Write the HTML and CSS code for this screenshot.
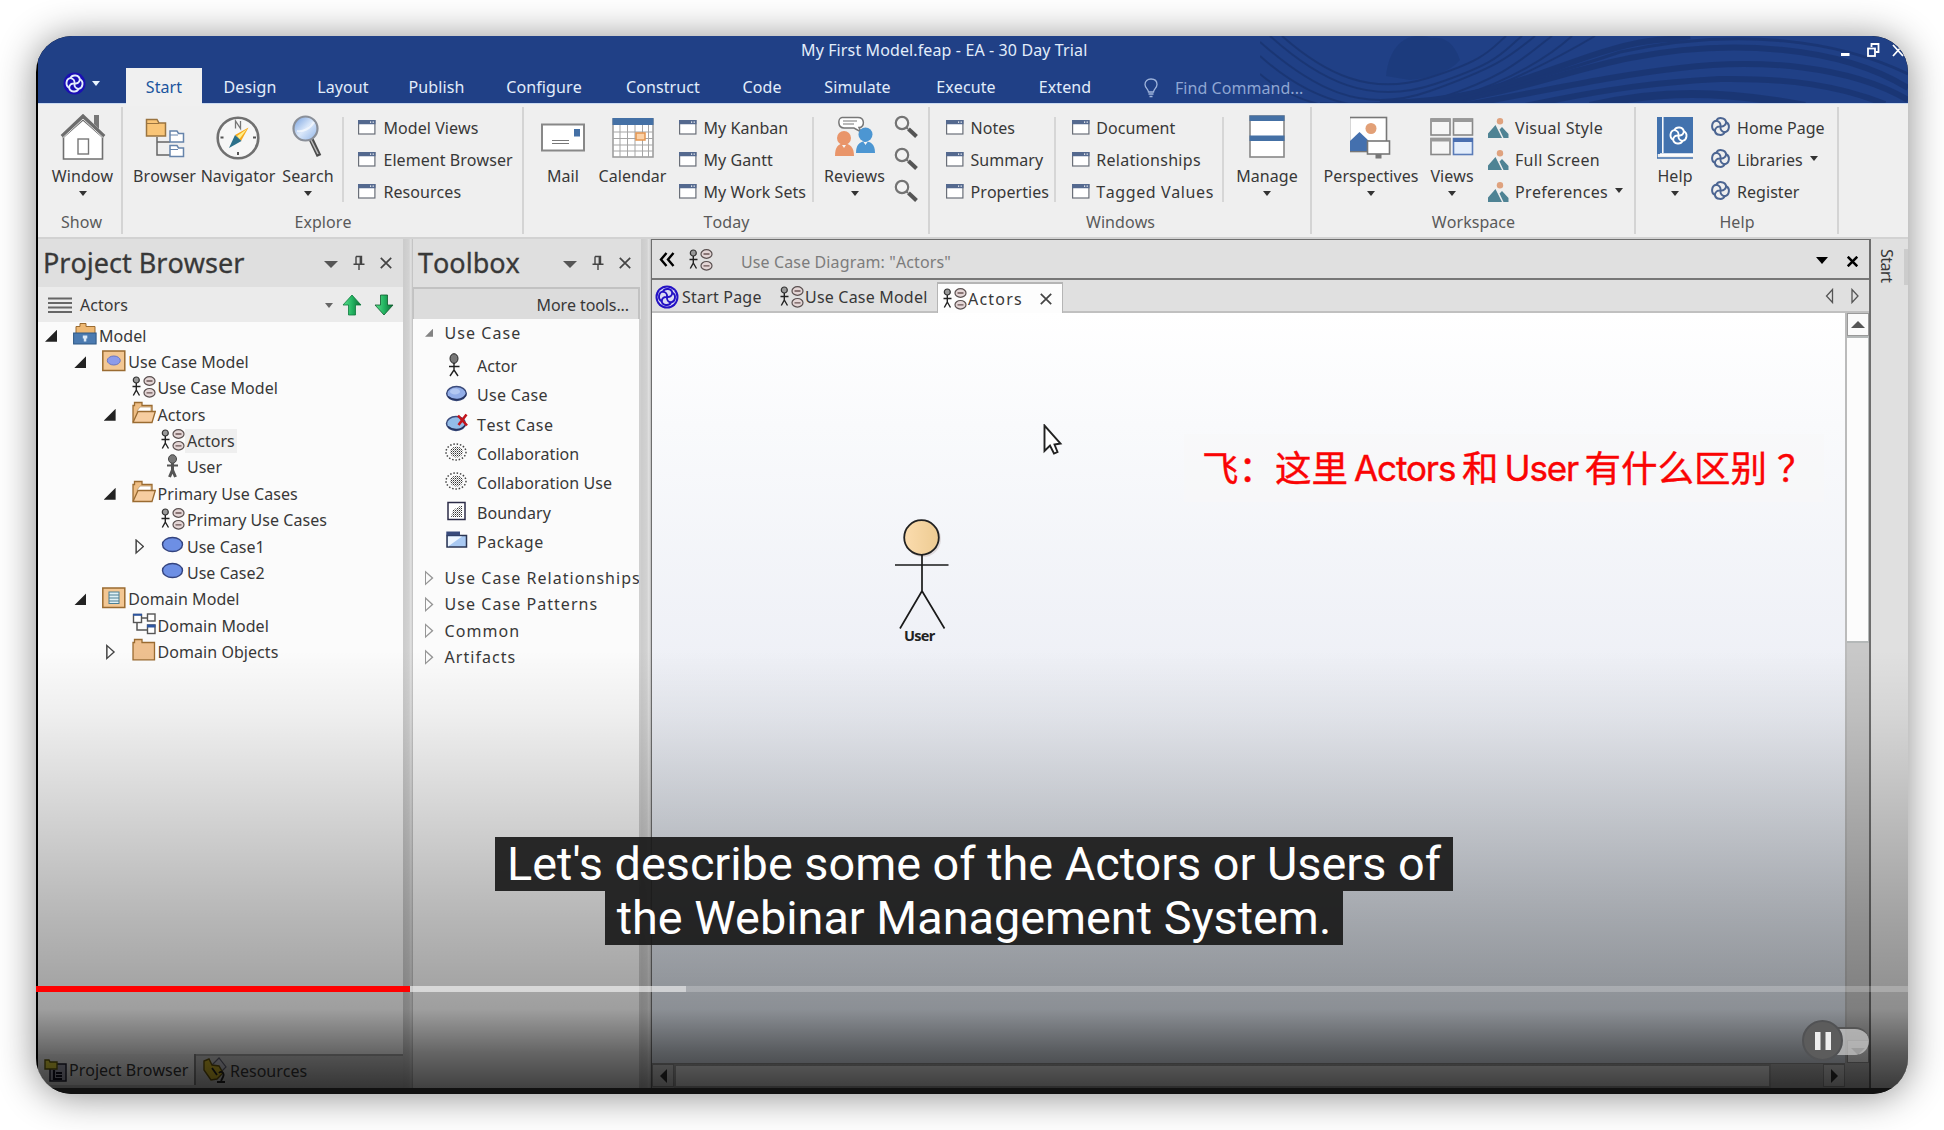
FILE: index.html
```html
<!DOCTYPE html>
<html lang="en">
<head>
<meta charset="utf-8">
<title>My First Model.feap - EA - 30 Day Trial</title>
<link rel="stylesheet" href="styles.css">
</head>
<body>
<svg width="0" height="0" class="defs" aria-hidden="true">
  <defs>
    <linearGradient id="green" x1="0" x2="1"><stop offset="0" stop-color="#5fe08e"/><stop offset=".5" stop-color="#23b562"/><stop offset="1" stop-color="#0b6b34"/></linearGradient>
    <linearGradient id="lens" x1="0" y1="0" x2="1" y2="1"><stop offset="0" stop-color="#6f9bdc"/><stop offset=".5" stop-color="#dbe8fa"/><stop offset="1" stop-color="#8db2e6"/></linearGradient>
    <linearGradient id="skin" x1="0" x2="1"><stop offset="0" stop-color="#fbdcae"/><stop offset="1" stop-color="#edcb92"/></linearGradient>
    <pattern id="dots" width="2" height="2" patternUnits="userSpaceOnUse"><rect width="1" height="1" fill="#333"/><rect x="1" y="1" width="1" height="1" fill="#999"/></pattern>
  </defs>
  <symbol id="knot" viewBox="0 0 24 24">
    <g fill="none" stroke="currentColor" stroke-width="2.300" stroke-linecap="round" transform="rotate(8 12 12)">
      <path d="M6.300 6.300A5.900 5.300 0 0 1 17.700 6.300A5.300 5.900 0 0 1 17.700 17.700A5.900 5.300 0 0 1 6.300 17.700A5.300 5.900 0 0 1 6.300 6.300Z"/>
      <path d="M12 12C12 8.500 9.500 6.300 6.300 6.300M12 12C15.500 12 17.700 9.500 17.700 6.300M12 12C12 15.500 14.500 17.700 17.700 17.700M12 12C8.500 12 6.300 14.500 6.300 17.700"/>
    </g>
  </symbol>
  <symbol id="win" viewBox="0 0 18 15"><rect x=".6" y=".6" width="16.300" height="13.400" fill="#fff" stroke="#6a6f78" stroke-width="1.200"/><path d="M0 0H17.500V4.200H0Z" fill="#54698f"/><path d="M12 1.500h1.200v1.200H12zM14.600 1.500h1.200v1.200h-1.200z" fill="#fff"/></symbol>
  <symbol id="mag" viewBox="0 0 24 22"><circle cx="8" cy="7.500" r="6.200" fill="#f3f3f3" stroke="#747474" stroke-width="2.200"/><path d="M12.500 12L14 13.500" stroke="#747474" stroke-width="2"/><path d="M14.500 13.500L22.500 21" stroke="#555" stroke-width="4"/></symbol>
  <symbol id="scene" viewBox="0 0 21 20"><circle cx="12" cy="3.300" r="3.200" fill="#dfa27e"/><path d="M0 20V15.500L7.500 7L14 20Z M15.500 20L11.500 11.500L14 9L20.500 16V20Z" fill="#4f8394"/></symbol>
  <symbol id="uc" viewBox="0 0 24 22"><circle cx="4.300" cy="4" r="3" fill="#999" stroke="#333" stroke-width="1.200"/><path d="M4.300 7V14L1.300 19.500M4.300 14L7.500 19.500M.5 10.500H8.500" fill="none" stroke="#222" stroke-width="1.400"/><g fill="#e4d6d6" stroke="#5a5050" stroke-width="1.200"><ellipse cx="17.500" cy="5" rx="5.500" ry="4.300"/><ellipse cx="17.500" cy="16.800" rx="5.500" ry="4.300"/></g><path d="M14.500 5h6M14.500 16.800h6" stroke="#6b5555" stroke-width="1.300"/></symbol>
  <symbol id="i-model" viewBox="0 0 24 24"><path d="M3 12V4.500H7V1.500H13V4.500H22V12Z" fill="#eeb873" stroke="#9a6b31"/><rect x=".6" y="11" width="22.500" height="11" fill="#4b7ab0" stroke="#2f5885"/><path d="M9.800 13.500h4.500v3h-1v3h-2.500v-3h-1z" fill="#dce9f7"/></symbol>
  <symbol id="i-ucpkg" viewBox="0 0 24 24"><rect x=".8" y="2" width="22" height="19.500" fill="#f3c793" stroke="#9a6b31" stroke-width="1.500"/><ellipse cx="11.800" cy="11.500" rx="6.500" ry="4.500" fill="#8d9bea" stroke="#6b76c0"/></symbol>
  <symbol id="i-dompkg" viewBox="0 0 24 24"><rect x=".8" y="2" width="22" height="19.500" fill="#f3c793" stroke="#9a6b31" stroke-width="1.500"/><rect x="7" y="6" width="10" height="11.500" fill="#dff0f5" stroke="#4c7f94"/><path d="M7 9h10M7 12h10M7 15h10" stroke="#4c7f94"/></symbol>
  <symbol id="i-open" viewBox="0 0 24 24"><path d="M1 21V4.500H2.500V1.500H10V4.500H20V10" fill="#eebd83" stroke="#9a6b31" stroke-width="1.300"/><path d="M5 10L8 6H19V12H6Z" fill="#fff" stroke="#b99a70" stroke-width=".8"/><path d="M1 21.500L6 10.500H23.300L20 21.500Z" fill="#f6cda0" stroke="#9a6b31" stroke-width="1.300"/></symbol>
  <symbol id="i-closed" viewBox="0 0 24 24"><path d="M1 21.800V4.500H2.500V1.500H10V4.500H22.500V21.800Z" fill="#eec08f" stroke="#9a6b31" stroke-width="1.300"/></symbol>
  <symbol id="i-user" viewBox="0 0 24 24"><ellipse cx="11.500" cy="5" rx="4" ry="4.300" fill="#777" stroke="#444"/><path d="M11.500 9V16L8.500 23M11.500 16L14.500 23" fill="none" stroke="#555" stroke-width="3"/><path d="M6 11.500H17" stroke="#555" stroke-width="2"/></symbol>
  <symbol id="i-oval" viewBox="0 0 24 24"><ellipse cx="11.500" cy="11.500" rx="10" ry="7" fill="#6d8fe4" stroke="#33437e" stroke-width="1.400"/></symbol>
  <symbol id="i-dom" viewBox="0 0 24 24"><g fill="#fff" stroke="#555" stroke-width="1.400"><rect x="1.500" y="2.500" width="8" height="8"/><rect x="15.500" y="2" width="7.500" height="7"/><rect x="15.500" y="13" width="7.500" height="8.500"/></g><path d="M9.500 6H15.500M5 10.500V18H15.500" fill="none" stroke="#555" stroke-width="1.500"/><path d="M1 1.800h9v2H1zM15 12.500h8.500v3H15z" fill="#2d55a0"/></symbol>
  <symbol id="t-actor" viewBox="0 0 24 24"><ellipse cx="9" cy="5.500" rx="4" ry="4.800" fill="#777" stroke="#222"/><path d="M9 10V17L5 23M9 17L13 23M4 13.500H14.500" fill="none" stroke="#222" stroke-width="1.400"/></symbol>
  <symbol id="t-oval" viewBox="0 0 24 24"><ellipse cx="11.500" cy="11.500" rx="9.800" ry="6.900" fill="#93aee8" stroke="#3a4a7a" stroke-width="1.500"/><ellipse cx="10" cy="9.500" rx="5" ry="3" fill="#b3c8f2"/><path d="M3 14.500C8 19 18 18.500 21 12.500" fill="none" stroke="#25335f" stroke-width="1.600"/></symbol>
  <symbol id="t-test" viewBox="0 0 24 24"><ellipse cx="11" cy="11.500" rx="9.500" ry="6.900" fill="#93bce8" stroke="#3a4a7a" stroke-width="1.500"/><path d="M3 14.500C8 19 16 18.500 20 13.500" fill="none" stroke="#25335f" stroke-width="1.600"/><path d="M13 3.500L22 13.500M21.500 2.500L13.500 13" stroke="#c3141c" stroke-width="2.600"/></symbol>
  <symbol id="t-collab" viewBox="0 0 24 24"><ellipse cx="11" cy="11" rx="10" ry="8" fill="none" stroke="#444" stroke-width="1.500" stroke-dasharray="1.500 1.800"/><ellipse cx="11.500" cy="11" rx="6.500" ry="5.500" fill="url(#dots)"/></symbol>
  <symbol id="t-bound" viewBox="0 0 24 24"><rect x="3" y="2.500" width="17" height="17" fill="#fff" stroke="#2c2c48" stroke-width="1.500"/><path d="M6 17L8 10L17 5V17Z" fill="url(#dots)"/></symbol>
  <symbol id="t-pkg" viewBox="0 0 24 24"><rect x="2" y="6.500" width="19.500" height="11.500" fill="#a9c9f2" stroke="#2b3552" stroke-width="1.500"/><path d="M3 17.500V7.500H17Z" fill="#eef6ff"/><path d="M1.300 2.500H15V6.500H1.300Z" fill="#384a7c"/></symbol>
  <symbol id="pin" viewBox="0 0 12 16"><path d="M3 1.500H8.500V9M3 1.500V9M7.300 1.500V9M.5 9.200H11.500M6 9.200V15" fill="none" stroke="#444" stroke-width="1.400"/></symbol>
  <symbol id="cross" viewBox="0 0 12 12"><path d="M.8.8L11.200 11.200M11.200.8L.8 11.200" stroke="currentColor"/></symbol>
</svg>

<main class="window">
  <header class="titlebar">
    <svg class="waves" viewBox="0 0 648 67" preserveAspectRatio="none">
      <g fill="none" stroke="#19336f">
        <path d="M126 40C130 5 150-5 172 2C188 0 196 12 200 24C190 36 170 42 150 44Z" fill="#1a3878" stroke="none" opacity=".8"/>
        <g stroke-width="2"><path d="M0 6C50 50 100 80 170 55S250 20 275 0"/><path d="M10 0C60 45 110 70 175 48S240 18 262 0"/><path d="M0 20C50 65 110 85 180 62S265 20 292 0"/><path d="M22 0C65 38 110 60 168 42S230 14 246 0"/><path d="M0 38C60 90 150 75 200 60S290 20 312 0"/><path d="M60 67C130 70 210 62 250 44S310 15 335 0"/></g>
        <g stroke-width="6"><path d="M120 67C220 66 270 40 330 20S400 6 430 0"/><path d="M150 70C250 60 300 36 370 22C470 2 580 10 648 52"/><path d="M200 70C300 52 350 40 420 32C500 22 590 30 648 64"/><path d="M265 70C350 52 400 46 460 43C530 42 580 50 625 68"/></g>
        <path d="M330 70C400 54 460 54 545 70" stroke-width="8"/>
        <path d="M190 70C280 40 320 30 360 16C480-10 580 5 648 38" stroke-width="3"/>
      </g>
    </svg>
    <div class="title-row">
      <span class="doc-title">My First Model.feap - EA - 30 Day Trial</span>
      <svg class="win-buttons" width="68" height="18" viewBox="0 0 68 18"><g stroke="#fff" fill="none" stroke-width="1.800"><path d="M2 13.500H10.500" stroke-width="3"/><path d="M32.500 6V3H39.500V11H37" /><rect x="29" y="7.500" width="7" height="7.500"/><path d="M54 4L64 15M64 4L54 15"/></g></svg>
    </div>
    <nav class="tabs">
      <span class="app-menu"><svg width="23" height="23"><circle cx="11.500" cy="11.500" r="11" fill="#1a0fb4"/><use href="#knot" x="1.500" y="1.500" width="20" height="20"/></svg><i class="caret light"></i></span>
      <span class="tab active">Start</span><span class="tab">Design</span><span class="tab">Layout</span><span class="tab">Publish</span><span class="tab">Configure</span><span class="tab">Construct</span><span class="tab">Code</span><span class="tab">Simulate</span><span class="tab">Execute</span><span class="tab">Extend</span>
      <span class="find"><svg width="14" height="20" viewBox="0 0 14 20"><path d="M4.500 14C4.500 11 1 10 1 6.500C1 3 3.500 1 7 1S13 3 13 6.500C13 10 9.500 11 9.500 14ZM4.500 16H9.500M5.500 18.500H8.500" fill="none" stroke="#9fb4dc" stroke-width="1.300"/></svg>Find Command...</span>
    </nav>
  </header>

  <section class="ribbon">
    <div class="group show">
      <div class="tools">
        <div class="big"><svg width="46" height="46" viewBox="0 0 46 46"><path d="M34 1H39V15L34 10Z" fill="#777"/><path d="M3.500 45V23L23 6L42.500 23V45Z" fill="#fff" stroke="#707070" stroke-width="1.600"/><path d="M2 22.500L23 2.500L44 22.500" fill="none" stroke="#6d6d6d" stroke-width="4"/><path d="M3 23.500L23 5L43 23.500" fill="none" stroke="#ddd" stroke-width="1"/><rect x="18" y="25" width="10.500" height="15" fill="#fff" stroke="#777" stroke-width="1.400"/></svg><span>Window</span><i class="caret"></i></div>
      </div><h3>Show</h3>
    </div>
    <div class="group explore">
      <div class="tools">
        <div class="big"><svg width="40" height="46" viewBox="0 0 40 46"><path d="M12 23V41H25M12 28H25" fill="none" stroke="#666" stroke-width="1.500"/><path d="M1.500 22V5.500H12L14 9H20.500V22Z" fill="#f9c577" stroke="#9a7440" stroke-width="1.500"/><path d="M1.500 9.500H14" stroke="#9a7440"/><g fill="#fff" stroke="#6684ab" stroke-width="1.500"><path d="M25 28V17H32L33.500 19.500H38.500V28Z"/><path d="M25 42.500V31.500H32L33.500 34H38.500V42.500Z"/></g><path d="M25 21H33M25 35.500H33" stroke="#6684ab"/></svg><span>Browser</span></div>
        <div class="big"><svg width="46" height="46" viewBox="0 0 46 46"><circle cx="23" cy="24" r="20.300" fill="#f6f6f6" stroke="#707070" stroke-width="2.600"/><path d="M20.500 14.500V7L25.500 14.500V7" fill="none" stroke="#777" stroke-width="1.300"/><path d="M5.500 23.500h3M38 23.500h3M23 38v3" stroke="#555" stroke-width="2"/><path d="M33.500 13.500L20 21L26 27Z" fill="#f7a81b"/><path d="M32 15L22 22L24.500 25Z" fill="#fff08a"/><path d="M14 34L20 21L26.500 27Z" fill="#2b708a"/></svg><span>Navigator</span></div>
        <div class="big"><svg width="34" height="46" viewBox="0 0 34 46"><path d="M20 25L28 42" stroke="#4c4c4c" stroke-width="5"/><path d="M20 26L27 40" stroke="#bbb" stroke-width="1.500"/><circle cx="14.500" cy="14.500" r="12" fill="url(#lens)" stroke="#8a8f98" stroke-width="2.200"/><path d="M6 17C12 18 19 15 23 8" stroke="#fff" stroke-width="2" fill="none" opacity=".6"/></svg><span>Search</span><i class="caret"></i></div>
        <ul class="list divided-left"><li><svg><use href="#win"/></svg>Model Views</li><li><svg><use href="#win"/></svg>Element Browser</li><li><svg><use href="#win"/></svg>Resources</li></ul>
      </div><h3>Explore</h3>
    </div>
    <div class="group today">
      <div class="tools">
        <div class="big"><svg width="44" height="46" viewBox="0 0 44 46"><rect x="1" y="10.500" width="42" height="26" fill="#fff" stroke="#888" stroke-width="2"/><rect x="33" y="15" width="6" height="7.500" fill="#4470a5"/><path d="M11 26.500H28M11 29.500H28" stroke="#777" stroke-width="1.200"/></svg><span>Mail</span></div>
        <div class="big"><svg width="42" height="46" viewBox="0 0 42 46"><rect x="1" y="5" width="40" height="38" fill="#fff" stroke="#999" stroke-width="1.500"/><path d="M8 11V43M15.500 11V43M23 11V43M30.500 11V43M36.500 11V43M1 18H41M1 24.500H41M1 31H41M1 37H41" stroke="#a5a5a5"/><rect x=".5" y="4" width="41" height="7" fill="#4470a5"/><rect x="24" y="19" width="9" height="7" fill="#fbd1a6" stroke="#e39550" stroke-width="1.500"/></svg><span>Calendar</span></div>
        <ul class="list divided-right"><li><svg><use href="#win"/></svg>My Kanban</li><li><svg><use href="#win"/></svg>My Gantt</li><li><svg><use href="#win"/></svg>My Work Sets</li></ul>
        <div class="big"><svg width="42" height="46" viewBox="0 0 42 46"><path d="M8 3.500H24C31 3.500 31 13.500 25 13.500L27 18L20 14H10C3.500 14 3.500 4 8 3.500Z" fill="#fff" stroke="#777" stroke-width="1.500"/><path d="M9 7H23M9 10H20" stroke="#777" stroke-width="1.200"/><circle cx="10" cy="24" r="7" fill="#e9956a"/><path d="M1 42C1 33 4 30 10 29C16 30 20 33 20 42Z" fill="#e9956a"/><circle cx="31.500" cy="20.500" r="7" fill="#4c96d2"/><path d="M22 39C22 31 25 28 31 27C37 28 41 30 41 39Z" fill="#4c96d2"/><path d="M8 31L10 34L12 31M29.500 28L31.500 31L33.500 28" fill="#f5f5f5"/></svg><span>Reviews</span><i class="caret"></i></div>
        <ul class="mags"><li><svg><use href="#mag"/></svg></li><li><svg><use href="#mag"/></svg></li><li><svg><use href="#mag"/></svg></li></ul>
      </div><h3>Today</h3>
    </div>
    <div class="group windows">
      <div class="tools">
        <ul class="list divided-right"><li><svg><use href="#win"/></svg>Notes</li><li><svg><use href="#win"/></svg>Summary</li><li><svg><use href="#win"/></svg>Properties</li></ul>
        <ul class="list divided-right"><li><svg><use href="#win"/></svg>Document</li><li class="wide"><svg><use href="#win"/></svg>Relationships</li><li class="wider"><svg><use href="#win"/></svg>Tagged Values</li></ul>
        <div class="big"><svg width="36" height="46" viewBox="0 0 36 46"><rect x="1" y="2" width="34" height="41" fill="#fff" stroke="#888" stroke-width="1.600"/><path d="M.5 1.500H35.500V7H.5ZM.5 21.500H35.500V27H.5Z" fill="#4470a5"/></svg><span>Manage</span><i class="caret"></i></div>
      </div><h3>Windows</h3>
    </div>
    <div class="group workspace">
      <div class="tools">
        <div class="big"><svg width="42" height="46" viewBox="0 0 42 46"><rect x="-.5" y="3.500" width="37" height="34" fill="#fff" stroke="#777" stroke-width="1.600"/><circle cx="21" cy="14.500" r="5.500" fill="#e2a077"/><path d="M0 37V27L9.500 18L20 28V37Z" fill="#4470ae"/><rect x="17.500" y="27" width="22" height="13" fill="#fff" stroke="#777" stroke-width="1.600"/><path d="M25.500 40h6v4.500h-6z" fill="#777"/></svg><span>Perspectives</span><i class="caret"></i></div>
        <div class="big"><svg width="44" height="46" viewBox="0 0 44 46"><g fill="#f5f5f5" stroke="#888" stroke-width="1.600"><rect x="1" y="5" width="19" height="16"/><rect x="23.500" y="5" width="19" height="16"/><rect x="1" y="24.500" width="19" height="16"/></g><rect x="23.500" y="24.500" width="19" height="16" fill="#e3edfb" stroke="#5b7cb8" stroke-width="1.600"/><path d="M1 4.500h19v3.500H1zM23.500 4.500h19v3.500h-19zM1 24h19v3.500H1z" fill="#999"/><path d="M23 24h20v4H23z" fill="#4a6fb0"/></svg><span>Views</span><i class="caret"></i></div>
        <ul class="list scenes"><li><svg><use href="#scene"/></svg>Visual Style</li><li><svg><use href="#scene"/></svg>Full Screen</li><li><svg><use href="#scene"/></svg>Preferences<i class="caret"></i></li></ul>
      </div><h3>Workspace</h3>
    </div>
    <div class="group help">
      <div class="tools">
        <div class="big"><svg width="36" height="46" viewBox="0 0 36 46"><path d="M0 3H36V40H0Z" fill="#4272ae"/><path d="M5.800 3V39" stroke="#fff" stroke-width="1.500"/><path d="M3 40.500H36" stroke="#fff" stroke-width="2.500"/><path d="M0 40V44H36" fill="none" stroke="#4272ae" stroke-width="1.500"/><use href="#knot" x="11.500" y="11.500" width="20" height="20" color="#fff"/></svg><span>Help</span><i class="caret"></i></div>
        <ul class="list knots"><li><svg><use href="#knot"/></svg>Home Page</li><li><svg><use href="#knot"/></svg>Libraries<i class="caret"></i></li><li><svg><use href="#knot"/></svg>Register</li></ul>
      </div><h3>Help</h3>
    </div>
  </section>

  <section class="workarea">
    <aside class="project">
      <div class="panel-title"><h2>Project Browser</h2><i class="caret big-caret"></i><svg class="pin"><use href="#pin"/></svg><svg class="x"><use href="#cross"/></svg></div>
      <div class="panel-bar">
        <svg width="24" height="16" viewBox="0 0 24 16"><path d="M0 1.500H24M0 6H24M0 10.500H24M0 15H24" stroke="#666" stroke-width="2"/></svg>
        <span>Actors</span><i class="caret"></i>
        <svg width="20" height="22" viewBox="0 0 20 22"><path d="M10 1L19 11H13.500V21H6.500V11H1Z" fill="url(#green)" stroke="#0d7a3c" stroke-width=".8"/></svg>
        <svg width="20" height="22" viewBox="0 0 20 22"><path d="M10 21L19 11H13.500V1H6.500V11H1Z" fill="url(#green)" stroke="#0d5a2c" stroke-width=".8"/></svg>
      </div>
      <ul class="tree">
        <li style="--level:0"><i class="open"></i><svg><use href="#i-model"/></svg><span>Model</span></li>
        <li style="--level:1"><i class="open"></i><svg><use href="#i-ucpkg"/></svg><span>Use Case Model</span></li>
        <li style="--level:2"><i></i><svg><use href="#uc"/></svg><span>Use Case Model</span></li>
        <li style="--level:2"><i class="open"></i><svg><use href="#i-open"/></svg><span>Actors</span></li>
        <li style="--level:3"><i></i><svg><use href="#uc"/></svg><span class="selected">Actors</span></li>
        <li style="--level:3"><i></i><svg><use href="#i-user"/></svg><span>User</span></li>
        <li style="--level:2"><i class="open"></i><svg><use href="#i-open"/></svg><span>Primary Use Cases</span></li>
        <li style="--level:3"><i></i><svg><use href="#uc"/></svg><span>Primary Use Cases</span></li>
        <li style="--level:3"><i class="shut"></i><svg><use href="#i-oval"/></svg><span>Use Case1</span></li>
        <li style="--level:3"><i></i><svg><use href="#i-oval"/></svg><span>Use Case2</span></li>
        <li style="--level:1"><i class="open"></i><svg><use href="#i-dompkg"/></svg><span>Domain Model</span></li>
        <li style="--level:2"><i></i><svg><use href="#i-dom"/></svg><span>Domain Model</span></li>
        <li style="--level:2"><i class="shut"></i><svg><use href="#i-closed"/></svg><span>Domain Objects</span></li>
      </ul>
      <div class="bottom-tabs">
        <span class="current"><svg width="24" height="25" viewBox="0 0 24 25"><rect x="6" y="6" width="16" height="17" fill="#aab" stroke="#223" stroke-width="1.500"/><path d="M1 11V2H5L6 4H13V11Z" fill="#e6d83c" stroke="#665e10" stroke-width="1.400"/><path d="M10 12V21H18M12 15h6M12 18h6" stroke="#112" stroke-width="2.200" fill="none"/></svg>Project Browser</span>
        <span><svg width="25" height="28" viewBox="0 0 25 28"><path d="M9 8L16 1L23 10L15 18Z" fill="#c9c9d2" stroke="#667" stroke-width="1.200"/><path d="M1 13V4L6 2L9 8L16 9L20 16L14 22L8 23Z" fill="#d8bc2c" stroke="#665510" stroke-width="1.400"/><path d="M16 16C18 13 22 16 20 20L18 24M14 25H22M9 11L14 18" fill="none" stroke="#222" stroke-width="1.800"/></svg>Resources</span>
      </div>
    </aside>
    <div class="splitter"></div>
    <aside class="toolbox">
      <div class="panel-title"><h2>Toolbox</h2><i class="caret big-caret"></i><svg class="pin"><use href="#pin"/></svg><svg class="x"><use href="#cross"/></svg></div>
      <div class="more">More tools...</div>
      <div class="tool-body">
        <h4><i class="open"></i>Use Case</h4>
        <ul>
          <li><svg><use href="#t-actor"/></svg>Actor</li><li class="wide"><svg><use href="#t-oval"/></svg>Use Case</li><li class="wider"><svg><use href="#t-test"/></svg>Test Case</li><li><svg><use href="#t-collab"/></svg>Collaboration</li><li><svg><use href="#t-collab"/></svg>Collaboration Use</li><li><svg><use href="#t-bound"/></svg>Boundary</li><li class="wider"><svg><use href="#t-pkg"/></svg>Package</li>
        </ul>
        <h4><i class="shut"></i>Use Case Relationships</h4><h4><i class="shut"></i>Use Case Patterns</h4><h4><i class="shut"></i>Common</h4><h4><i class="shut"></i>Artifacts</h4>
      </div>
    </aside>
    <div class="splitter"></div>
    <section class="document">
      <div class="doc-head">
        <svg width="16" height="15" viewBox="0 0 16 15"><path d="M7.500 1L2 7.500L7.500 14M14.500 1L9 7.500L14.500 14" fill="none" stroke="#000" stroke-width="2.400"/></svg>
        <svg class="uc"><use href="#uc"/></svg><span>Use Case Diagram: "Actors"</span>
        <i class="caret black"></i><svg class="x bold"><use href="#cross"/></svg>
      </div>
      <div class="doc-tabs">
        <span class="dt start"><svg width="24" height="24"><circle cx="12" cy="12" r="11.500" fill="#2412c4"/><circle cx="12" cy="12" r="9.500" fill="#dcdcf4"/><use href="#knot" x="2" y="2" width="20" height="20" color="#2412c4"/></svg>Start Page</span>
        <span class="dt ucm"><svg class="uc"><use href="#uc"/></svg>Use Case Model</span>
        <span class="dt on"><svg class="uc"><use href="#uc"/></svg>Actors<svg class="x"><use href="#cross"/></svg></span>
        <svg class="arrows" width="34" height="16" viewBox="0 0 34 16"><path d="M7.500 1.500V14.500L1.500 8ZM27 1.500V14.500L33 8Z" fill="none" stroke="#555" stroke-width="1.300"/></svg>
      </div>
      <div class="sheet">
        <div class="canvas">
          <svg class="actor" width="60" height="114" viewBox="0 0 60 114"><circle cx="29" cy="20" r="18" fill="#b9a9a9" opacity=".35"/><circle cx="27.500" cy="18.500" r="17.300" fill="url(#skin)" stroke="#222" stroke-width="1.800"/><path d="M28 36V72.500M1 46H54.500M28 72L6 109.500M28 72L50.500 109.500" stroke="#1a1a1a" stroke-width="1.700" fill="none"/></svg>
          <span class="actor-name">User</span>
          <svg class="pointer" width="20" height="32" viewBox="0 0 20 32"><path d="M1.500 1.500V27L7 21.500L11 29.500L14.500 28L11.500 20.500L17.500 19.500Z" fill="#fff" stroke="#222" stroke-width="1.900"/></svg>
          <div class="note" lang="zh"><span>飞：</span><span>这里</span><b>Actors</b><span>和</span><b class="user">User</b><span>有什么区别</span><span class="qm">？</span></div>
        </div>
        <div class="vscroll"><span class="btn"><i class="up"></i></span><span class="thumb"></span><span class="btn low"><i class="down"></i></span></div>
        <div class="hscroll"><span class="btn"><i class="left"></i></span><span class="thumb"></span><span class="btn"><i class="right"></i></span></div>
        <div class="corner"></div>
      </div>
    </section>
    <aside class="side"><span>Start</span><i></i></aside>
  </section>
  <div class="strip"></div>

  <div class="shade"></div>
  <div class="pause"><i></i><span><svg width="16" height="18" viewBox="0 0 16 18"><path d="M0 0h5.500v18H0zM10.500 0H16v18h-5.500z" fill="#eee"/></svg></span></div>
  <div class="progress"><i class="loaded"></i><i class="played"></i></div>
  <div class="caption"><p>Let's describe some of the Actors or Users of</p><p>the Webinar Management System.</p></div>
</main>
</body>
</html>
```
FILE: styles.css
```css
* { box-sizing: border-box; }
body { margin: 0; width: 1944px; height: 1130px; overflow: hidden; background: #fff; padding: 36px; font: 16px/22px "Noto Sans", sans-serif; font-kerning: none; letter-spacing: .05px; color: #383838; }
h2, h3, h4, ul, p { margin: 0; padding: 0; font-weight: 400; }
ul { list-style: none; }
svg { display: block; flex: none; }
i { display: block; flex: none; }
.defs { position: absolute; }
.wide { letter-spacing: .3px; }
.wider { letter-spacing: .6px; }

.window { position: relative; width: 1872px; height: 1058px; padding-left: 2px; border-radius: 36px; overflow: hidden; background: #000; display: grid; grid-template-rows: 67px 136px 849px 6px; white-space: nowrap; }
body::before { content: ""; position: absolute; left: 36px; top: 36px; width: 1872px; height: 1058px; border-radius: 36px; box-shadow: 0 2px 38px rgba(0,0,0,.46); }

.caret { width: 0; height: 0; border: 4.500px solid transparent; border-top: 5px solid #333; border-bottom: 0; }
.caret.light { border-top-color: #e8f4ff; }
.caret.black { border-top: 7px solid #000; border-left-width: 6px; border-right-width: 6px; }
.big-caret { border-top: 7px solid #555; border-left-width: 7px; border-right-width: 7px; }
.x { width: 12px; height: 12px; color: #444; stroke-width: 1.700px; }

.titlebar { position: relative; background: #204086; color: #e2edfb; }
.waves { position: absolute; right: 0; top: 0; width: 648px; height: 67px; opacity: .75; }
.title-row { position: relative; height: 28px; display: flex; align-items: center; padding-left: 763px; }
.doc-title { width: 1038px; font-kerning: auto; letter-spacing: .12px; }
.tabs { position: relative; margin-top: 4px; height: 35px; display: grid; grid-template-columns: 88px 76px 96px 90px 97px 118px 120px 78px 113px 104px 94px 1fr; }
.tab { text-align: center; line-height: 38px; letter-spacing: .1px; }
.tab.active { background: #f0f0f0; color: #1b559e; }
.app-menu { display: flex; align-items: center; gap: 6px; padding: 0 0 7px 25px; }
.find { display: flex; align-items: center; gap: 17px; padding-left: 32px; padding-top: 1px; color: #8fa6d3; }

.ribbon { background: #efefef; border-top: 1px solid #c9d9f0; border-bottom: 2px solid #d2d2d2; display: grid; grid-template-columns: 85px 401px 406px 382px 324px 203px; }
.group { border-right: 2px solid #d4d4d4; margin: 3px 0; display: flex; flex-direction: column; padding-top: 5px; }
.group h3 { font-size: 16px; text-align: center; color: #5a5a5a; line-height: 22px; margin-top: -.5px; padding-left: 1px; }
.group.show h3 { padding-left: 4px; }
.tools { display: flex; height: 99px; }
.big { display: flex; flex-direction: column; align-items: center; padding-top: 2px; flex: none; }
.big > span { margin: 5px -10px 4px; }
.show .big { width: 85px; padding-left: 4px; }
.explore .tools { padding-left: 6px; }
.explore .big:nth-child(1) { width: 71px; }
.explore .big:nth-child(2) { width: 76px; }
.explore .big:nth-child(3) { width: 64px; }
.today .tools { padding-left: 9px; }
.today .big:nth-child(1) { width: 60px; }
.today .big:nth-child(2) { width: 79px; }
.today .list { width: 142px; padding-left: 7px; }
.today .list li svg { margin-right: 6.500px; }
.today .big:nth-child(4) { width: 81px; }
.windows .tools { padding-left: 16px; }
.windows .list:first-child { width: 111px; }
.windows .list li svg { margin-right: 6.500px; }
.windows .list:nth-child(2) { width: 170px; padding-left: 16px; }
.windows .big { width: 86px; }
.workspace .tools { padding-left: 8px; }
.workspace .big:nth-child(1) { width: 102px; }
.workspace .big:nth-child(2) { width: 60px; }
.help .tools { padding-left: 12px; }
.help .big { width: 54px; }
.list { position: relative; height: 96.600px; }
.list li { display: flex; align-items: center; height: 32.200px; }
.list li svg { width: 18px; height: 15px; margin-right: 7.500px; margin-top: -1px; }
.divided-left { padding-left: 18px; }
.divided-left::before, .divided-right::after { content: ""; position: absolute; top: 5px; bottom: 7px; left: 2px; width: 2px; background: #d6d6d6; }
.divided-right::after { left: auto; right: 0; }
.scenes { padding-left: 6px; letter-spacing: .3px; }
.list.scenes li svg { width: 21px; height: 20px; margin-right: 6px; }
.knots { padding-left: 8px; }
.list.knots li svg { width: 21px; height: 21px; margin-right: 6px; color: #4c6592; margin-top: -4px; }
.list .caret { margin: -4px 0 0 7px; }
.mags { padding-left: 0; margin-left: -1px; }
.mags li { height: 32.200px; padding-top: 3px; }
.mags svg { width: 24px; height: 23px; }

.workarea { display: flex; background: #e0e0e0; }
.project { width: 365px; display: flex; flex-direction: column; }
.panel-title { height: 48px; display: flex; align-items: center; padding-left: 5px; background: #dfdfdf; }
.panel-title h2 { font-size: 27px; line-height: 36px; margin-top: 0; letter-spacing: 0; -webkit-text-stroke: .3px #383838; }
.panel-title .big-caret { margin-left: auto; margin-top: 3px; }
.pin { width: 12px; height: 16px; }
.project .pin { margin: 0 15px 0 15px; }
.project .panel-title .x { margin-right: 11px; }
.toolbox .pin { margin: 0 15px 0 15px; }
.toolbox .panel-title .x { margin-right: 10px; }
.panel-bar { height: 35px; background: #ebebeb; display: flex; align-items: center; padding: 1px 9px 0 10px; }
.panel-bar span { margin: 0 auto 0 8px; }
.panel-bar .caret { margin-right: 9px; border-top-color: #666; }
.panel-bar .caret + svg { margin-right: 12px; }
.tree { flex: 1; background: #fbfbfb; padding-top: .500px; }
.tree li { height: 26.370px; display: flex; align-items: center; padding-left: calc(29.300px * var(--level)); }
.tree li > i { width: 26px; margin-right: 9px; display: grid; place-items: center; }
.tree li svg { width: 24px; height: 24px; margin-top: -3px; }
.tree li span { padding: 0 2px; line-height: 24px; }
.tree .selected { background: #efefef; }
.open::before { content: ""; width: 12px; height: 12px; background: #222; clip-path: polygon(100% 0, 100% 100%, 0 100%); }
.shut::before { content: ""; width: 9px; height: 16px; margin-left: 2px; background: #444; clip-path: polygon(0 0, 100% 50%, 0 100%, 0 0, 1.500px 3px, 1.500px 13px, 7px 50%, 1.500px 3px); }
.bottom-tabs { height: 34px; display: flex; border-top: 2px solid #aaa; background: #d0d0d0; padding-bottom: 3px; letter-spacing: 0; }
.bottom-tabs span { display: flex; align-items: center; gap: 2px; padding: 0 7px; }
.bottom-tabs .current { width: 158px; padding: 0 0 0 6px; gap: 1px; background: #f4f4f4; border-right: 2px solid #888; margin-top: -2px; padding-top: 1px; }

.splitter { width: 10px; background: linear-gradient(90deg, #ccc 0 1px, #d2d2d2 6px, #e2e2e2 8px, #bbb 10px); }

.toolbox { width: 228px; display: flex; flex-direction: column; }
.more { height: 32px; margin-right: 1px; border: 2px solid #c2c2c2; border-width: 2px 2px 0 1px; background: #dcdcdc; padding-right: 9px; text-align: right; line-height: 32px; letter-spacing: -.1px; }
.tool-body { flex: 1; background: #fbfbfb; border-right: 2px solid #d0d0d0; overflow: hidden; }
.tool-body h4 { font-size: 16px; height: 26.370px; display: flex; align-items: center; letter-spacing: 1.050px; padding-left: 7px; }
.tool-body h4 i { width: 18px; display: grid; place-items: center; margin-right: 6.500px; opacity: .55; }
.tool-body h4 .open::before { width: 8px; height: 8px; }
.tool-body h4 .shut::before { margin-left: 0; }
.tool-body h4:first-child { margin-top: .5px; margin-bottom: 5.500px; }
.tool-body ul { margin-bottom: 8px; }
.tool-body li { display: flex; align-items: center; height: 29.370px; padding-left: 32px; }
.tool-body li svg { width: 24px; height: 24px; margin: -2px 8px 0 0; }

.document { width: 1220px; display: flex; flex-direction: column; border: 1px solid #6e6e6e; border-width: 1px 2px 0 1px; }
.doc-head { height: 40px; border-bottom: 2px solid #777; display: flex; align-items: center; color: #7c7c7c; padding: 1px 11px 0 7px; }
.uc { width: 24px; height: 22px; }
.doc-head .uc { margin: 0 28px 0 14px; }
.doc-head span { padding-top: 4px; letter-spacing: .12px; }
.doc-head .caret { margin-left: auto; margin-right: 19px; margin-top: 2px; }
.doc-head .bold { color: #000; stroke-width: 2.800px; width: 11px; height: 11px; margin-top: 3px; }
.doc-tabs { height: 33px; border-bottom: 2px solid #c0c0c0; display: flex; letter-spacing: .2px; }
.dt { display: flex; align-items: center; gap: 2px; padding-top: 2px; }
.start { width: 128px; padding-left: 3px; gap: 3px; }
.ucm { width: 157px; gap: 1px; }
.on { width: 126px; margin-top: 2px; height: 31px; background: #fdfdfd; border: 2px solid #b5b5b5; border-width: 2px 1px 0; padding-left: 5px; padding-top: 0; letter-spacing: 1.200px; gap: 1px; }
.on .x { margin-left: 16px; }
.arrows { margin: 8px 10px 0 auto; }
.sheet { flex: 1; display: grid; grid-template: 1fr 25px / 1fr 24px; }
.canvas { position: relative; background: linear-gradient(#fff, #f9fafc 15%, #eef0f6 47%, #dae1ea); }
.actor { position: absolute; left: 242px; top: 206px; }
.actor-name { position: absolute; left: 252px; top: 311px; font-weight: 700; font-size: 14.500px; letter-spacing: -.7px; color: #222; }
.pointer { position: absolute; left: 391px; top: 111px; }
.note { position: absolute; left: 532px; top: 121px; width: 640px; height: 68px; background: rgba(247,247,247,.55); color: #fa0404; font: 400 36.500px/65px "Noto Sans CJK SC", sans-serif; -webkit-text-stroke: .4px #fa0404; letter-spacing: 0; display: flex; padding-left: 18px; }
.note b { font: 400 35px/68px Inter, sans-serif; letter-spacing: -1.100px; width: 114px; padding-left: 6px; }
.note .user { width: 86px; }
.note .qm { margin-left: 10px; }

.vscroll { display: flex; flex-direction: column; background: #c8c8c8; border-left: 2px solid #bbb; }
.btn { display: grid; place-items: center; background: #fafafa; width: 22px; height: 22px; border: 1px solid #999; }
.vscroll .btn { height: 23px; }
.vscroll .thumb { height: 307px; background: #fcfcfc; border: 2px solid #b4b8b8; border-left: 0; border-right-width: 1px; margin-top: 0; }
.vscroll .low { margin-top: auto; }
.btn i { border: 7px solid transparent; }
.btn .up { border-top: 0; border-bottom-color: #555; }
.btn .down { border-bottom: 0; border-top-color: #444; }
.btn .left { border-left: 0; border-right-color: #333; }
.btn .right { border-right: 0; border-left-color: #333; }
.hscroll { display: flex; background: #bdbdbd; border-top: 1px solid #999; }
.hscroll .thumb { width: 1097px; background: #efefef; border: 2px solid #aaa; margin-right: auto; }
.hscroll .btn { background: #d8d8d8; height: 23px; }
.corner { background: #c4c4c4; }

.side { flex: 1; display: flex; align-items: flex-start; justify-content: space-between; padding-top: 10px; }
.side span { writing-mode: vertical-rl; margin-left: 5px; letter-spacing: -.5px; font-size: 16px; }
.side i { width: 4px; height: 36px; background: #ccc; }
.strip { background: #111; }

.shade { position: absolute; left: 0; right: 0; top: 614px; height: 438px; background: linear-gradient(rgba(0,0,0,0), rgba(0,0,0,.05) 15%, rgba(0,0,0,.14) 34%, rgba(0,0,0,.28) 62%, rgba(0,0,0,.37) 82%, rgba(0,0,0,.60) 92%, rgba(0,0,0,.74)); }
.progress { position: absolute; left: 0; right: 0; top: 950px; height: 6px; background: rgba(255,255,255,.22); }
.progress i { position: absolute; left: 0; top: 0; height: 6px; }
.loaded { width: 650px; background: rgba(255,255,255,.45); }
.played { width: 374px; background: #f00; }
.pause { position: absolute; left: 1766px; top: 984px; width: 70px; height: 42px; }
.pause > i { position: absolute; left: 20px; top: 7px; width: 47px; height: 28px; border-radius: 14px; background: rgba(200,200,200,.75); border-top: 2px solid #555; }
.pause span { position: absolute; left: 0; top: 0; width: 41px; height: 41px; border-radius: 50%; background: #5c5c5c; border: 2px solid #515254; display: grid; place-items: center; }
.caption { position: absolute; left: 459px; top: 801px; width: 958px; display: flex; flex-direction: column; align-items: center; font-kerning: auto; letter-spacing: 0; }
.caption p { background: rgba(25,25,25,.92); color: #fff; font: 46.800px/54px Roboto, sans-serif; height: 54px; padding: 0 12px; }
```
